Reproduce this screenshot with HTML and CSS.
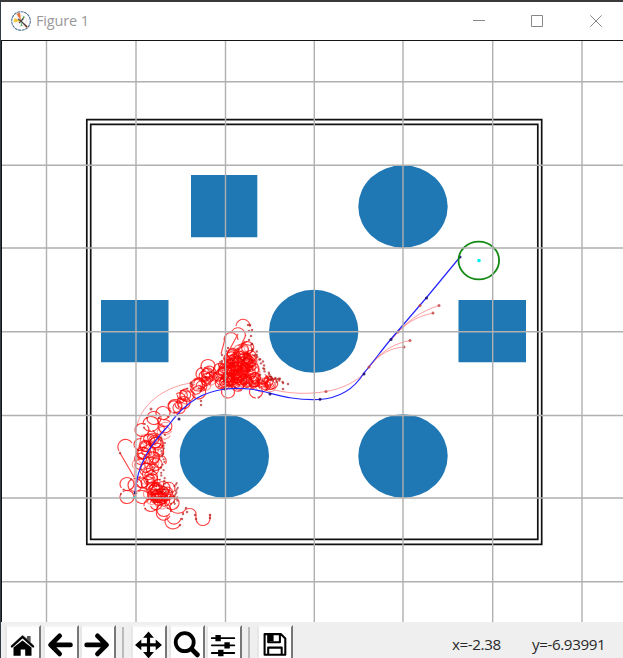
FILE: index.html
```html
<!DOCTYPE html>
<html lang="en">
<head>
<meta charset="utf-8">
<title>Figure 1</title>
<link rel="stylesheet" href="styles.css">
</head>
<body>
<div class="window">
<header class="titlebar">
  <svg class="logo" width="20" height="20" viewBox="0 0 20 20"><circle class="logo-ring" cx="10" cy="10" r="9.3"/><circle class="logo-grid" cx="10" cy="10" r="5.5"/><path fill="#e8733a" d="M10 10L5.5 3 9 1.5z"/><path fill="#f3c83c" d="M10 10L2.5 11.5 3.5 7z"/><path fill="#e8733a" d="M10 10L17 15.5 15.5 17z"/><path fill="#5ba957" d="M10 10L11.5 15H9.8zM10 10L12.5 5 14 6z"/><path class="logo-hand" d="M7 8l3 2 2.5-2.5M8 12l2-2 6 6"/></svg>
  <span class="title">Figure 1</span>
  <div class="controls">
    <svg width="12" height="12"><path d="M0 5.5h12"/></svg>
    <svg width="12" height="12"><path d="M.5 .5h11v11H.5z"/></svg>
    <svg width="12" height="12"><path d="M.3.3l11.4 11.4M11.7.3L.3 11.7"/></svg>
  </div>
</header>
<main class="canvas">
<svg width="621" height="582" viewBox="2 41 621 582">
  <g class="obstacle">
    <ellipse cx="403" cy="206.5" rx="44.7" ry="41.2"/><ellipse cx="313.7" cy="331.3" rx="44.7" ry="41.5"/><ellipse cx="224.3" cy="456" rx="44.7" ry="41.8"/><ellipse cx="403" cy="456" rx="44.7" ry="41.8"/>
    <path d="M191 175h66.3v62.3H191zM101 300h67.5v62.3H101zM458.5 300H526v62.3h-67.5z"/>
  </g>
  <path class="wall" d="M86.8 119.6H541.7V544.3H86.8zM90.7 124.3H537.8V539.4H90.7z"/>
  <g id="search"></g>
  <g class="branch">
    <path d="M135 492C132 470 138 449 142 434M136 432C138 405 164 387 191 383C206 371 229 379 255 384C280 394 305 395 326 391.5C351 387 363 376 371 365C382 350 396 343 410 340.5M369 367C380 353 391 348 404 347M391 340C407 321 419 312 439 305.5M391 340C403 325 414 317 433 313"/>
  </g>
  <path class="path" d="M135 493C137 462 154 441 168 426C189 397 207 392 225 389C266 385 274 401 319 399.5C343 398 356 386 364 373C373 362 382 350 391 339L427 297 460 257"/>
  <g id="nodes"></g>
  <ellipse class="goal" cx="478.8" cy="260.5" rx="20.3" ry="18.8"/><circle class="target" cx="479" cy="260.6" r="1.8"/><circle class="target" cx="135" cy="497.5" r="1.5"/>
  <path class="grid" d="M46.5 41V623M136 41V623M225.5 41V623M314.3 41V623M403 41V623M492.7 41V623M582 41V623M2 81.8H623M2 165.3H623M2 248H623M2 331.8H623M2 415.5H623M2 498H623M2 581.8H623"/>
</svg>
</main>
<footer class="toolbar">
  <div class="tool"><svg viewBox="0 0 30 30"><path fill="#555" d="M2 17L15 5l5 4V6h4v7l4 4-2 2L15 9 4 19z"/><path d="M5 19L15 11l10 8v9h-7v-7h-5v7H5z"/><path class="line thin" d="M3 18L15 7l12 11"/></svg></div>
  <div class="tool"><svg viewBox="0 0 30 30"><path class="line heavy" d="M26 16H5M14 6L4 16l10 10"/></svg></div>
  <div class="tool"><svg viewBox="0 0 30 30"><path class="line heavy" d="M3 16h21M15 6l10 10-10 10"/></svg></div>
  <i class="separator"></i>
  <div class="tool"><svg viewBox="0 0 30 30"><path class="line medium" d="M15 5v22M4 16h22"/><path d="M15 1l6 7H9zM15 31l6-7H9zM0 16l7-6v12zM30 16l-7-6v12z"/></svg></div>
  <div class="tool"><svg viewBox="0 0 30 30"><circle class="line lens" cx="13" cy="13" r="10"/><path class="line heavy" d="M21 21l6 6"/></svg></div>
  <div class="tool"><svg viewBox="0 0 30 30"><path class="line slider" d="M2 8.5h25M2 16.5h25M2 25h25"/><path d="M6 5h6v7H6zM16 13h6v7h-6zM9 21.5h6v7H9z"/></svg></div>
  <i class="separator"></i>
  <div class="tool"><svg viewBox="0 0 30 30"><path class="line disk" d="M4 4h18l5 5v18H4zM8 4v9h13V4M8 27v-8h15v8"/><path d="M8 4h6v8H8z"/></svg></div>
  <span class="coord x-coord">x=-2.38</span><span class="coord y-coord">y=-6.93991</span>
</footer>
</div>
<script src="plot.js"></script>
</body>
</html>
```
FILE: styles.css
```css
*{box-sizing:border-box}
body{margin:0;background:#fff;font-family:"Open Sans","Noto Sans",sans-serif;overflow:hidden}
.window{width:623px;height:658px;border-top:2px solid #3b393b;border-left:1px solid #343d43;overflow:hidden}
.titlebar{height:38px;display:flex;align-items:center;padding:0 21px 0 10px;background:#fff}
.logo{margin-top:-1px}
.logo-ring{fill:#fff;stroke:#4b7291;stroke-width:1.1;stroke-dasharray:3 .6}
.logo-grid{fill:none;stroke:#ddd;stroke-width:.7}
.logo-hand{fill:none;stroke:#424242;stroke-width:1.2}
.title{font-size:14.5px;line-height:20px;color:#999;margin-left:5px;letter-spacing:-.15px;white-space:nowrap}
.controls{display:flex;gap:46.5px;margin-left:auto}
.controls svg{fill:none;stroke:#888;stroke-width:1}
.controls svg:nth-child(2){margin-left:-.5px;margin-right:.5px}
.canvas{height:582px;border-top:1px solid #151515;border-left:1px solid #151515;background:#fff;overflow:hidden}
.canvas svg{display:block}
.obstacle{fill:#1f77b4}
.wall,.branch,.path,.goal,.grid,.arc{fill:none}
.wall{stroke:#111;stroke-width:1.7}
.grid{stroke:#b0b0b0;stroke-width:1.4}
.branch{stroke:#ff0000;stroke-opacity:.42;stroke-width:.9}
.path{stroke:#2525ff;stroke-width:1.2}
.goal{stroke:#148a14;stroke-width:1.8}
.target{fill:#00eeee}
.arc{stroke:#ff0000;stroke-width:1.1;stroke-opacity:.75}
.light{stroke-opacity:.4}
.dot{fill:#ad1212;fill-opacity:.66}
.dark{fill:#201068;fill-opacity:.9}
.soft{fill:#c04040;fill-opacity:.8}
.toolbar{height:36px;background:#efefef;display:flex;align-items:flex-start;padding:3px 0 0 4px}
.tool{flex:none;width:36px;height:38px;margin-right:1.6px;padding:3px 2px;background:#fff;border:2px solid #e7e7e7;border-top-color:#f5f5f5;border-right-color:#777}
.tool svg{display:block;width:27px;height:28px;fill:#000;overflow:visible}
.line{fill:none;stroke:#000;stroke-linejoin:round;stroke-linecap:round}
.heavy{stroke-width:5.4}.medium{stroke-width:3.5}.lens{stroke-width:4.2}.thin{stroke-width:2}.slider{stroke-width:2}.disk{stroke-width:2.3}
.separator{flex:none;width:2px;height:36px;background:#bcbcbc;margin:2px 6.8px 0 4.4px}
.coord{font-size:15.2px;line-height:20px;color:#292929;padding-top:9px;white-space:nowrap;letter-spacing:-.4px}
.x-coord{width:51px;margin-left:auto;margin-right:29px}
.y-coord{width:73px;margin-right:18px}
```
FILE: plot.js
```js
const ns = 'http://www.w3.org/2000/svg';
const search = document.getElementById('search');
const nodes = document.getElementById('nodes');
let seed = 417;
function random() {
  seed = (Math.imul(seed, 1664525) + 1013904223) >>> 0;
  return seed / 4294967296;
}
function path(d, cls = 'arc') {
  const p = document.createElementNS(ns, 'path');
  p.setAttribute('d', d);
  p.setAttribute('class', cls);
  search.appendChild(p);
}
function dot(x, y, cls = '', r = 1.25, parent = search) {
  const c = document.createElementNS(ns, 'circle');
  c.setAttribute('cx', x);
  c.setAttribute('cy', y);
  c.setAttribute('r', r);
  c.setAttribute('class', 'dot ' + cls);
  parent.appendChild(c);
}
function loop(x, y, r, marked = true, strong = false) {
  const a = random() * Math.PI * 2;
  const b = a + (strong ? 5.9 : 4.4 + random() * 1.8);
  const p = t => [x + Math.cos(t) * r, y + Math.sin(t) * r * .93];
  const s = p(a), e = p(b);
  path(`M${s}A${r} ${r * .93} 0 1 1 ${e}`, !strong && random() < .25 ? 'arc light' : 'arc');
  if (marked) dot(e[0], e[1], '', 1.05);
}
function inside(x, y, points) {
  let hit = false;
  for (let i = 0, j = points.length - 1; i < points.length; j = i++) {
    const [ax, ay] = points[i], [bx, by] = points[j];
    if ((ay > y) !== (by > y) && x < (bx - ax) * (y - ay) / (by - ay) + ax) hit = !hit;
  }
  return hit;
}
function scatter(points, count, low, high) {
  const xs = points.map(p => p[0]), ys = points.map(p => p[1]);
  const left = Math.min(...xs), top = Math.min(...ys);
  const width = Math.max(...xs) - left, height = Math.max(...ys) - top;
  while (count) {
    const x = left + random() * width, y = top + random() * height;
    if (!inside(x, y, points)) continue;
    loop(x, y, low + random() * (high - low), random() < .45);
    count--;
  }
}
// Branch density varies by region of the search tree.
scatter([[140,440],[157,434],[160,461],[155,475],[153,489],[141,488],[137,468]], 38, 5, 7);
scatter([[146,493],[158,483],[165,485],[171,490],[172,500],[155,506],[148,502]], 32, 5.2, 7);
scatter([[142,440],[153,421],[166,413],[171,420],[158,447]], 9, 5.5, 7);
scatter([[168,412],[183,394],[201,382],[206,389],[183,407]], 16, 5, 7);
scatter([[201,386],[205,372],[218,368],[231,354],[240,344],[247,339],[250,350],[256,378],[247,387],[224,387]], 100, 4.5, 6.5);
scatter([[219,382],[241,344],[248,350],[257,381],[238,386]], 40, 4.5, 6.2);
scatter([[251,374],[268,379],[279,384],[270,387],[254,387]], 20, 4.3, 6);
[[127,497,7],[127,484,7],[142,497,7],[135,485,7],[142,430,7],[151,424,8],[154,418,7],[163,413,7],[175,406,7],[187,395,7],[208,366,7],[203,374,7],[228,392,6.5],[256,392,6.5],[151,505,7],[164,510,7],[163,488,7],[172,503,7]].forEach(([x,y,r])=>loop(x,y,r,true,true));
[
  'M119 451A7 7 0 1 1 132 443M120 453L134 477M157 510A7 7 0 0 0 170 516M172 503C166 508 173 516 183 512M167 516A7 7 0 0 0 181 518M166 518A7.5 7 0 0 0 180 525',
  'M183 513C185 507 194 507 196 513V519A7 7 0 0 0 210 518V514M236 326A6.8 7 0 1 1 250 327M231 333A7 7 0 1 1 245 337M224 340A6.5 7 0 0 1 238 340M221 354L226 335M224 360L238 334M212 377L245 341M202 390L247 341M230 368L246 335'
].forEach(d=>path(d));
[[248,325],[250,325],[249,331],[252,330],[251,336],[249,340],[222,355],[226,351],[222,361],[228,348],[201,401],[201,405],[191,383],[283,389],[288,384],[120,453],[180,525],[182,519],[183,514],[186,508],[187,512],[196,519],[195,515],[210,518],[210,515]].forEach(p=>dot(...p));
for(let i=0;i<32;i++) dot(251+i*1.02+(random()-.5)*4,345+Math.min(i*1.6,32)+i*.12+(random()-.5)*5,'',1.2);
for(let i=0;i<22;i++) dot(163+(random()-.5)*4,435+i*2.7,'',1.15);
for(let i=0;i<14;i++) dot(173+random()*5,483+i*1.6,'',1.1);
[[151,409],[191,383],[326,391.5],[369,367],[398,332],[404,347],[410,340.5],[420,305.5],[439,305.5],[433,313]].forEach(([x,y])=>dot(x,y,'soft',1.5,nodes));
[[179,419],[225,389],[270,394],[320,399.3],[364,374],[391,339.5],[426.5,298],[460,257],[135,493]].forEach(([x,y])=>dot(x,y,'dark',1.5,nodes));
```
